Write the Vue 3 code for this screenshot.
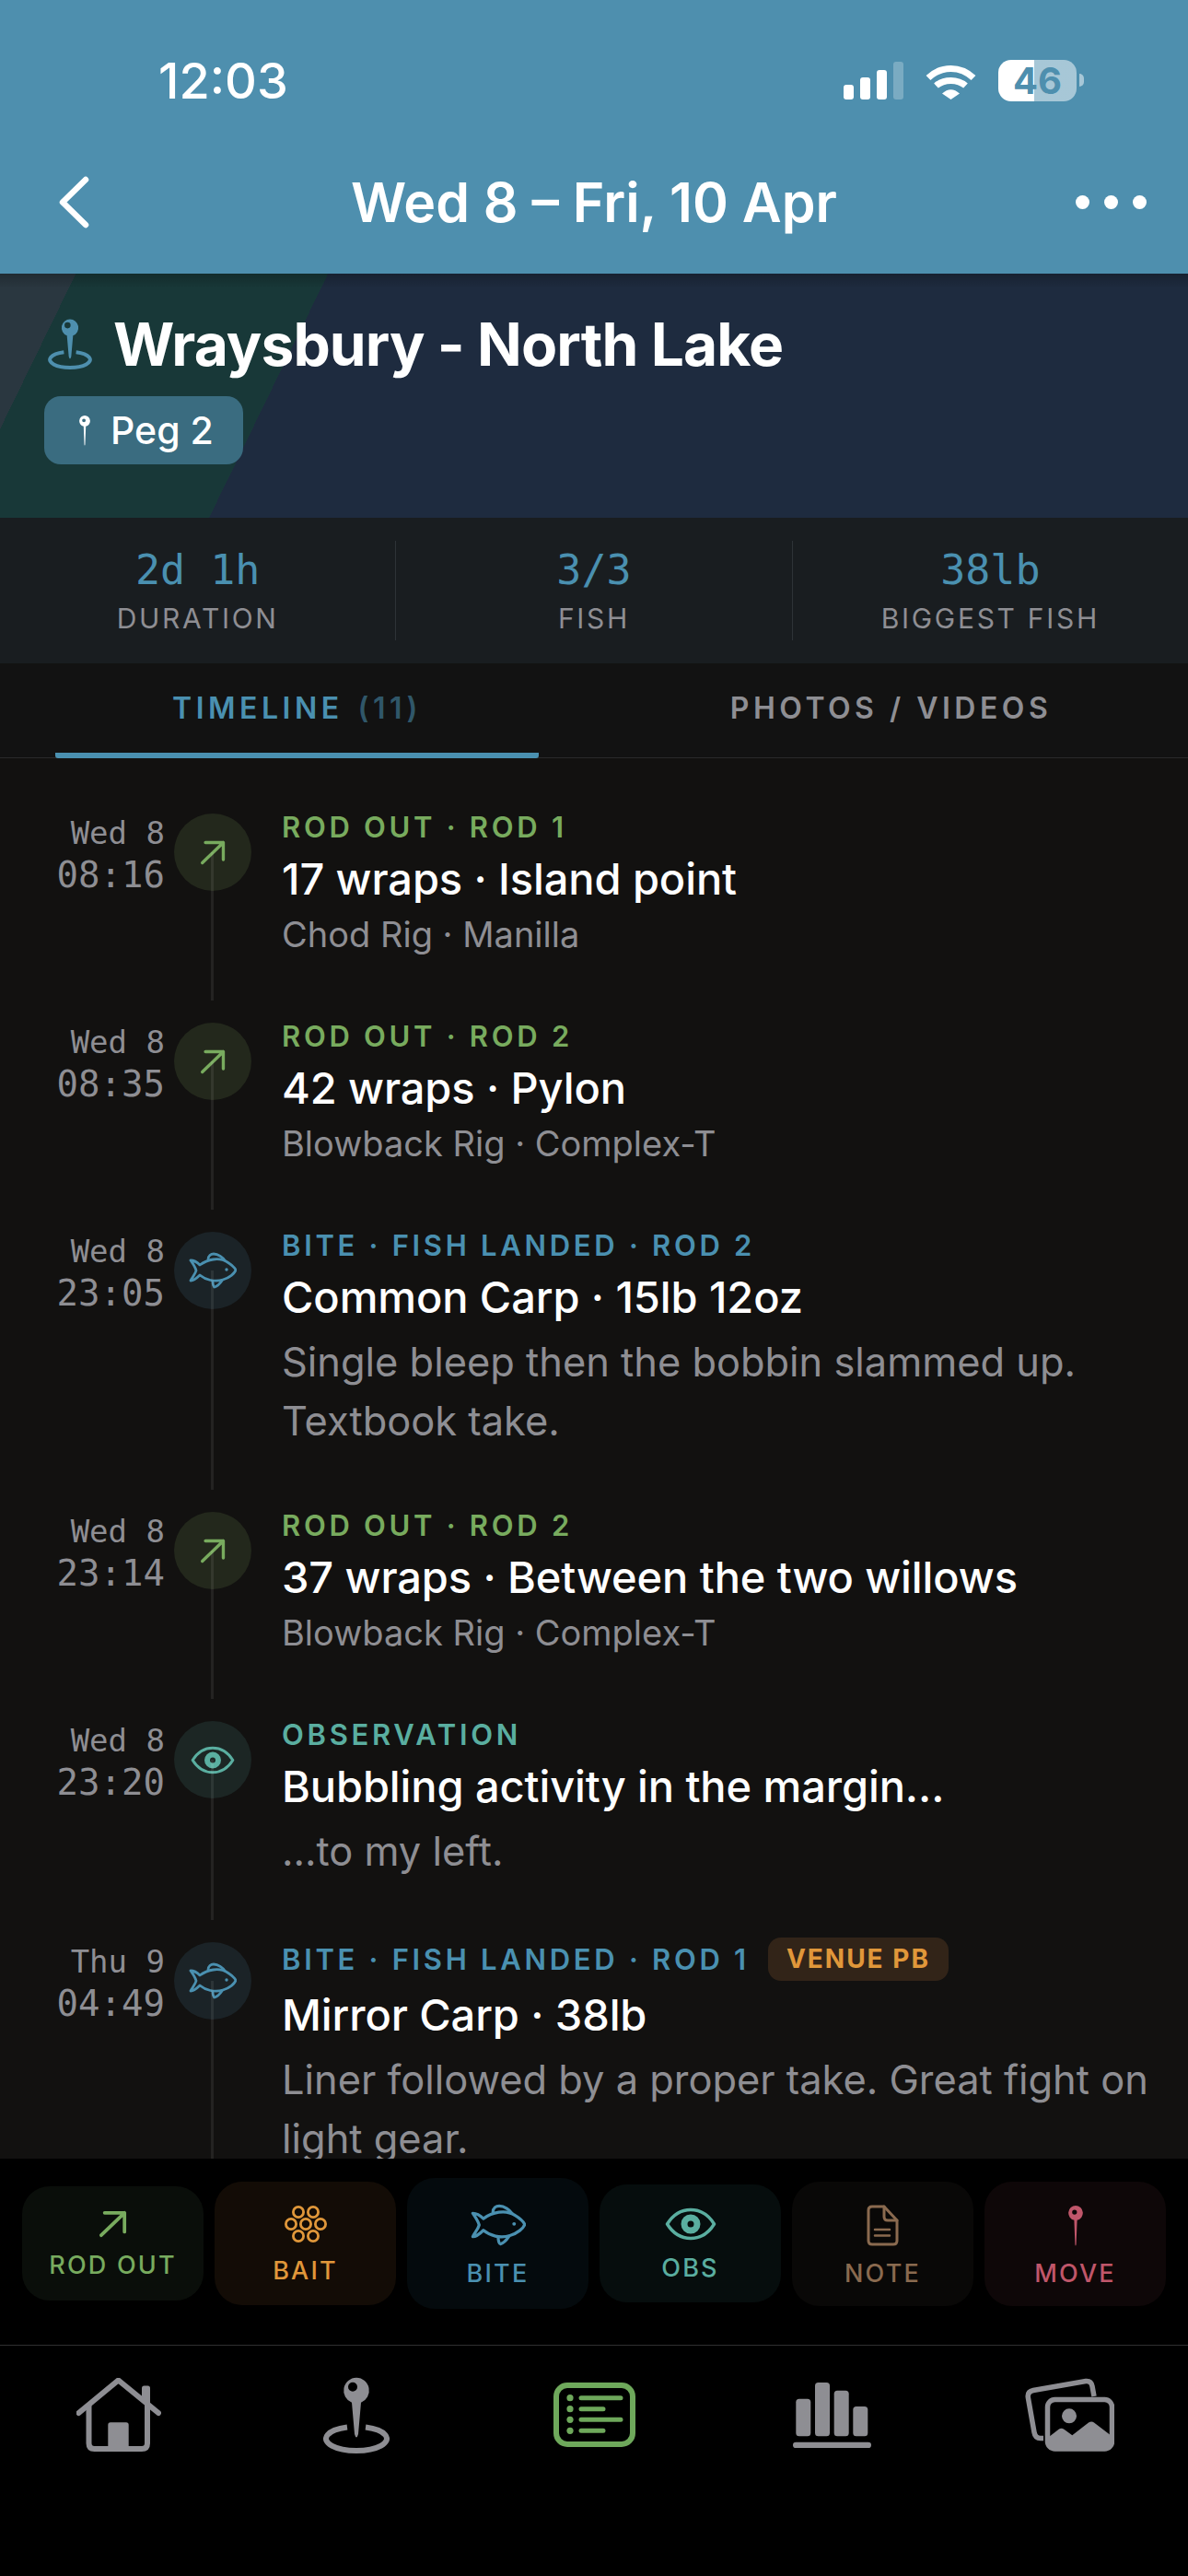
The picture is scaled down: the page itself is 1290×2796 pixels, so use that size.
<template>
  <div class="screen">
    <svg class="defs" width="0" height="0" aria-hidden="true">
      <symbol id="i-arrow" viewBox="0 0 34 32">
        <path d="M3 29 L30 3 M7 3 H30 V25" fill="none" stroke="currentColor" stroke-width="4" stroke-linecap="round" stroke-linejoin="round" />
      </symbol>
      <symbol id="i-fish" viewBox="0 0 52 40">
        <g fill="none" stroke="currentColor" stroke-width="2.8" stroke-linejoin="round" stroke-linecap="round">
          <path d="M12 14 C20 8 33 5 42 11 C46 13.5 50 17 51 19.5 C50 23 44 28 37 30 C28 33 18 30 12 25 C8 29 4 31 2 31 C4 27 7 24 8 20 C7 16 4 12 2 9 C5 9 9 11 12 14 Z" />
          <path d="M21 8 C21 4 24 2 27 2 C32 2 37 6 39 9" />
          <path d="M26 32 C26 35 27 38 28 38 C31 37 34 34 36 31" />
        </g>
        <circle cx="41" cy="19" r="1.7" fill="currentColor" />
      </symbol>
      <symbol id="i-eye" viewBox="0 0 56 36">
        <path d="M2.5 18 C10 6 19 2.5 28 2.5 C37 2.5 46 6 53.5 18 C46 30 37 33.5 28 33.5 C19 33.5 10 30 2.5 18 Z" fill="none" stroke="currentColor" stroke-width="3.5" stroke-linejoin="round" />
        <path fill-rule="evenodd" fill="currentColor" d="M28 7.5 a10.5 10.5 0 1 0 0 21 a10.5 10.5 0 1 0 0 -21 Z M28 14.5 a3.5 3.5 0 1 1 0 7 a3.5 3.5 0 1 1 0 -7 Z" />
      </symbol>
      <symbol id="i-bait" viewBox="0 0 46 42">
        <g fill="none" stroke="currentColor" stroke-width="2.8">
          <circle cx="15" cy="8" r="5.6" /><circle cx="31" cy="8" r="5.6" />
          <circle cx="7" cy="21" r="5.6" /><circle cx="23" cy="21" r="5.6" /><circle cx="39" cy="21" r="5.6" />
          <circle cx="15" cy="34" r="5.6" /><circle cx="31" cy="34" r="5.6" />
        </g>
      </symbol>
      <symbol id="i-note" viewBox="0 0 35 45">
        <g fill="none" stroke="currentColor" stroke-width="3" stroke-linejoin="round" stroke-linecap="round">
          <path d="M6 2 H19 L33 17 V39 Q33 43 29 43 H6 Q2 43 2 39 V6 Q2 2 6 2 Z" />
          <path d="M19 2 V13 Q19 17 23 17 H33" />
          <path stroke-width="2.5" d="M9 27 H25 M9 33.5 H25" />
        </g>
      </symbol>
      <symbol id="i-peg" viewBox="0 0 16 44">
        <path fill-rule="evenodd" fill="currentColor" d="M8 0 a8 8 0 0 1 1.6 15.8 L8.6 42 Q8 45 7.4 42 L6.4 15.8 A8 8 0 0 1 8 0 Z M6.8 4.5 a2.6 2.6 0 1 0 0 5.2 a2.6 2.6 0 1 0 0 -5.2 Z" />
      </symbol>
      <symbol id="i-pin" viewBox="0 0 72 83">
        <path fill-rule="evenodd" fill="currentColor" d="M36 0.7 a14 14 0 0 1 5 27 L38 62 Q36 69 34 62 L31 27.7 A14 14 0 0 1 36 0.7 Z M32 5.7 a5 5 0 1 0 0 10 a5 5 0 1 0 0 -10 Z" />
        <path d="M46 54.6 A33 13 0 1 1 26 54.6" fill="none" stroke="currentColor" stroke-width="6" />
      </symbol>
    </svg>

    <header class="topbar">
      <div class="status">
        <span class="clock">12:03</span>
        <div class="status-right">
          <svg class="signal" viewBox="0 0 65 41" width="65" height="41">
            <rect x="0" y="25" width="11" height="16" rx="3" fill="#fff" />
            <rect x="18" y="17" width="11" height="24" rx="3" fill="#fff" />
            <rect x="36" y="9" width="11" height="32" rx="3" fill="#fff" />
            <rect x="54" y="0" width="11" height="41" rx="3" fill="#fff" opacity=".25" />
          </svg>
          <svg class="wifi" viewBox="0 0 57 42" width="57" height="42">
            <path d="M4 18.5 C18 5 39 5 53 18.5 M12.5 27 C21 19.5 36 19.5 44.5 27" fill="none" stroke="#fff" stroke-width="7" />
            <path d="M19 35.5 Q28.5 27 38 35.5 L28.5 42 Z" fill="#fff" />
          </svg>
          <div class="battery">
            <div class="battery-body">46</div>
            <div class="battery-cap"></div>
          </div>
        </div>
      </div>
      <div class="nav">
        <svg class="back" viewBox="0 0 33 57" width="33" height="57">
          <path d="M29 4 L4 28.5 L29 53" fill="none" stroke="#fff" stroke-width="6.5" stroke-linecap="round" stroke-linejoin="round" />
        </svg>
        <div class="nav-title">Wed 8 – Fri, 10 Apr</div>
        <div class="dots"><i></i><i></i><i></i></div>
      </div>
    </header>

    <section class="hero">
      <div class="venue">
        <svg class="venue-pin"><use href="#i-pin" /></svg>
        <h1>Wraysbury - North Lake</h1>
      </div>
      <div class="peg">
        <svg class="peg-pin"><use href="#i-peg" /></svg>
        <span>Peg 2</span>
      </div>
    </section>

    <section class="stats">
      <div v-for="s in stats" :key="s.label" class="stat">
        <div class="stat-value">{{ s.value }}</div>
        <div class="stat-label">{{ s.label }}</div>
      </div>
    </section>

    <nav class="tabs">
      <div class="tab active">TIMELINE <span class="count">(11)</span></div>
      <div class="tab">PHOTOS / VIDEOS</div>
    </nav>

    <main class="timeline">
      <div v-for="(e, i) in events" :key="i" class="event">
        <div class="when">
          <div class="day">{{ e.day }}</div>
          <div class="time">{{ e.time }}</div>
        </div>
        <div class="node">
          <div class="dot" :class="'dot-' + e.kind">
            <svg :class="['node-icon', 'ni-' + e.kind]"><use :href="'#i-' + icons[e.kind]" /></svg>
          </div>
          <div class="line"></div>
        </div>
        <div class="body">
          <div class="label-row" :class="{ tagged: e.tag }">
            <span class="label" :class="'c-' + e.kind">{{ e.label }}</span>
            <span v-if="e.tag" class="tag">{{ e.tag }}</span>
          </div>
          <div class="title">{{ e.title }}</div>
          <div v-if="e.rig" class="rig">{{ e.rig }}</div>
          <div v-if="e.note" class="note">{{ e.note }}</div>
        </div>
      </div>
    </main>

    <section class="actions">
      <div v-for="a in actions" :key="a.name" class="action" :class="'act-' + a.kind">
        <svg :class="['action-icon', 'ai-' + a.kind]"><use :href="'#i-' + a.icon" /></svg>
        <span>{{ a.name }}</span>
      </div>
    </section>

    <footer class="tabbar">
      <svg class="tb-icon" viewBox="0 0 92 80" width="92" height="80">
        <path d="M2.5 38 L45.5 2.5 L89 38" fill="none" stroke="currentColor" stroke-width="6" stroke-linecap="round" stroke-linejoin="round" />
        <path d="M13.5 29 V71 Q13.5 77 19.5 77 H71 Q77 77 77 71 V29" fill="none" stroke="currentColor" stroke-width="6" />
        <path d="M34.3 77 V51 Q34.3 48.3 37 48.3 H54 Q56.7 48.3 56.7 51 V77 Z" fill="currentColor" />
        <path d="M71 20 V11 Q71 8.5 73.5 8.5 H77.5 Q80 8.5 80 11 V29 Z" fill="currentColor" />
      </svg>
      <svg class="tb-icon tb-pin"><use href="#i-pin" /></svg>
      <svg class="tb-icon tb-active" viewBox="0 0 89 70" width="89" height="70">
        <rect x="3" y="3" width="83" height="64" rx="12" fill="none" stroke="currentColor" stroke-width="6" />
        <g fill="currentColor">
          <circle cx="18" cy="16.7" r="3.6" /><circle cx="18" cy="28.7" r="3.6" />
          <circle cx="18" cy="40.3" r="3.6" /><circle cx="18" cy="52.3" r="3.6" />
        </g>
        <path d="M30 16.7 H73 M30 28.7 H54 M30 40.3 H73 M30 52.3 H54" fill="none" stroke="currentColor" stroke-width="5" stroke-linecap="round" />
      </svg>
      <svg class="tb-icon" viewBox="0 0 85 71" width="85" height="71">
        <g fill="currentColor">
          <rect x="3.3" y="17.7" width="16" height="40.6" rx="3.5" />
          <rect x="24" y="0" width="16" height="58.3" rx="3.5" />
          <rect x="44.7" y="8.7" width="16" height="49.6" rx="3.5" />
          <rect x="65.3" y="26" width="16" height="32.3" rx="3.5" />
          <rect x="0" y="64.7" width="85" height="6.3" rx="3.1" />
        </g>
      </svg>
      <svg class="tb-icon" viewBox="0 0 97 80" width="97" height="80">
        <path d="M20 65.5 H17 Q11 65.5 10 59 L3.3 21 Q2.5 15 9 13.5 L66 3.5 Q72 3 73 9 L75 20" fill="none" stroke="currentColor" stroke-width="5.5" />
        <rect x="24.5" y="23.5" width="70" height="53.5" rx="8" fill="none" stroke="currentColor" stroke-width="5.5" />
        <circle cx="48" cy="41.3" r="8" fill="currentColor" />
        <path d="M26 64 L37 55.5 Q39.7 54 42 55.5 L51.3 62.3 L69 48.5 Q72.3 46.5 75 48.5 L93 62.3 V72 Q93 78 87 78 H32 Q26 78 26 72 Z" fill="currentColor" />
      </svg>
    </footer>
  </div>
</template>

<script setup>
const stats = [
  { value: '2d 1h', label: 'DURATION' },
  { value: '3/3', label: 'FISH' },
  { value: '38lb', label: 'BIGGEST FISH' },
]

const icons = { rod: 'arrow', bite: 'fish', obs: 'eye' }

const events = [
  { day: 'Wed 8', time: '08:16', kind: 'rod', label: 'ROD OUT · ROD 1', title: '17 wraps · Island point', rig: 'Chod Rig · Manilla' },
  { day: 'Wed 8', time: '08:35', kind: 'rod', label: 'ROD OUT · ROD 2', title: '42 wraps · Pylon', rig: 'Blowback Rig · Complex-T' },
  { day: 'Wed 8', time: '23:05', kind: 'bite', label: 'BITE · FISH LANDED · ROD 2', title: 'Common Carp · 15lb 12oz', note: 'Single bleep then the bobbin slammed up. Textbook take.' },
  { day: 'Wed 8', time: '23:14', kind: 'rod', label: 'ROD OUT · ROD 2', title: '37 wraps · Between the two willows', rig: 'Blowback Rig · Complex-T' },
  { day: 'Wed 8', time: '23:20', kind: 'obs', label: 'OBSERVATION', title: 'Bubbling activity in the margin...', note: '...to my left.' },
  { day: 'Thu 9', time: '04:49', kind: 'bite', label: 'BITE · FISH LANDED · ROD 1', tag: 'VENUE PB', title: 'Mirror Carp · 38lb', note: 'Liner followed by a proper take. Great fight on light gear.' },
]

const actions = [
  { name: 'ROD OUT', kind: 'rod', icon: 'arrow' },
  { name: 'BAIT', kind: 'bait', icon: 'bait' },
  { name: 'BITE', kind: 'bite', icon: 'fish' },
  { name: 'OBS', kind: 'obs', icon: 'eye' },
  { name: 'NOTE', kind: 'note', icon: 'note' },
  { name: 'MOVE', kind: 'move', icon: 'peg' },
]
</script>

<style>
html, body { background: #000; }
</style>

<style scoped>
.screen {
  width: 1290px;
  height: 2796px;
  display: flex;
  flex-direction: column;
  overflow: hidden;
  background: #000;
  font-family: Inter, "Liberation Sans", sans-serif;
  color: #fff;
}

.defs { position: absolute; }

.topbar {
  height: 297px;
  flex: none;
  background: #4e8fae;
}

.status {
  height: 174px;
  display: flex;
  align-items: center;
  justify-content: space-between;
  padding: 0 113px 0 172px;
}

.clock {
  font-size: 54px;
  font-weight: 500;
}

.status-right {
  display: flex;
  align-items: center;
  gap: 23px;
}

.battery {
  display: flex;
  align-items: center;
  gap: 3px;
}

.battery-body {
  width: 85px;
  height: 45px;
  border-radius: 14px;
  display: flex;
  align-items: center;
  justify-content: center;
  background: linear-gradient(90deg, #fff 46%, rgba(255, 255, 255, 0.5) 46%);
  color: #4e8fae;
  font-size: 40px;
  font-weight: 700;
}

.battery-cap {
  width: 5px;
  height: 14px;
  border-radius: 0 6px 6px 0;
  background: rgba(255, 255, 255, 0.5);
}

.nav {
  height: 90px;
  display: grid;
  grid-template-columns: 1fr auto 1fr;
  align-items: center;
  padding: 0 64px;
}

.nav-title {
  font-size: 59px;
  font-weight: 600;
}

.dots {
  display: flex;
  justify-content: flex-end;
  gap: 16px;
  margin-right: -19px;
}

.dots i {
  width: 15px;
  height: 15px;
  border-radius: 50%;
  background: #fff;
}

.hero {
  height: 265px;
  flex: none;
  padding: 38px 48px 0;
  box-sizing: border-box;
  background:
    linear-gradient(180deg, rgba(0, 0, 0, 0.22), rgba(0, 0, 0, 0) 16px),
    linear-gradient(116deg, #2a3740 5.8%, #183838 5.8%, #183838 25.1%, #1e2b3f 25.1%);
}

.venue {
  display: flex;
  align-items: center;
  gap: 23px;
  height: 76px;
}

.venue-pin {
  width: 48px;
  height: 55px;
  margin-left: 4px;
  color: #4e8fae;
}

.venue h1 {
  margin: 0;
  font-size: 64px;
  font-weight: 700;
  letter-spacing: -0.9px;
}

.peg {
  margin-top: 19px;
  width: 216px;
  height: 74px;
  box-sizing: border-box;
  padding-left: 38px;
  display: flex;
  align-items: center;
  gap: 22px;
  border-radius: 18px;
  background: #3a6c80;
  font-size: 41px;
  font-weight: 500;
}

.peg-pin {
  width: 12px;
  height: 33px;
  color: #fff;
}

.stats {
  height: 158px;
  flex: none;
  display: flex;
  align-items: center;
  background: #191d20;
}

.stat {
  flex: 1;
  height: 108px;
  display: flex;
  flex-direction: column;
  align-items: center;
  border-right: 1px solid #2e3337;
}

.stat:last-child { border-right: none; }

.stat-value {
  font-family: "DejaVu Sans Mono", monospace;
  font-size: 45px;
  line-height: 64px;
  color: #4a90b0;
}

.stat-label {
  font-size: 30px;
  line-height: 40px;
  letter-spacing: 2.7px;
  color: #8e8e93;
}

.tabs {
  height: 103px;
  flex: none;
  box-sizing: border-box;
  display: flex;
  gap: 120px;
  padding: 0 60px;
  background: #121212;
  border-bottom: 1px solid #2a2a2a;
}

.tab {
  flex: 1;
  display: flex;
  justify-content: center;
  gap: 0.5em;
  padding-top: 29px;
  font-size: 32px;
  line-height: 40px;
  font-weight: 600;
  letter-spacing: 4.5px;
  color: #8e8e93;
}

.tab.active {
  height: 103px;
  box-sizing: border-box;
  color: #4a90b0;
  border-bottom: 6px solid #4a90b0;
  border-radius: 3px;
}

.count { opacity: 0.55; }

.timeline {
  flex: 1;
  min-height: 0;
  overflow: hidden;
  padding-top: 60px;
  background: #121110;
}

.event {
  display: flex;
  padding-bottom: 67px;
}

.when {
  width: 179px;
  flex: none;
  padding-top: 1px;
  text-align: right;
  font-family: "DejaVu Sans Mono", monospace;
  color: #8e8e93;
}

.day {
  font-size: 34px;
  line-height: 40px;
}

.time {
  font-size: 39px;
  line-height: 52px;
}

.node {
  width: 84px;
  flex: none;
  margin: 0 33px 0 10px;
  position: relative;
}

.dot {
  width: 84px;
  height: 84px;
  border-radius: 50%;
  display: flex;
  align-items: center;
  justify-content: center;
}

.dot-rod { background: #23281c; color: #78ab5e; }
.dot-bite { background: #1b2327; color: #4a90b0; }
.dot-obs { background: #1c2624; color: #5aaea0; }

.ni-rod { width: 29px; height: 27px; }
.ni-bite { width: 52px; height: 40px; }
.ni-obs { width: 48px; height: 31px; }

.line {
  position: absolute;
  left: 40px;
  top: 42px;
  bottom: -43px;
  width: 3px;
  background: rgba(255, 255, 255, 0.08);
}

.body {
  flex: 1;
  padding-right: 30px;
  min-width: 0;
}

.label-row {
  display: flex;
  align-items: center;
  gap: 20px;
  height: 28px;
}

.label-row.tagged { height: 36px; }

.label {
  font-size: 31px;
  font-weight: 600;
  letter-spacing: 3.7px;
}

.c-rod { color: #78ab5e; }
.c-bite { color: #4a90b0; }
.c-obs { color: #5aaea0; }

.tag {
  margin: -6px 0;
  height: 47px;
  padding: 0 20px;
  display: flex;
  align-items: center;
  border-radius: 14px;
  background: #322418;
  color: #e0973a;
  font-size: 28px;
  font-weight: 700;
  letter-spacing: 2px;
}

.title {
  margin-top: 11px;
  font-size: 47px;
  line-height: 64px;
  font-weight: 450;
  letter-spacing: -0.1px;
}

.rig {
  margin-top: 3px;
  margin-bottom: 3px;
  font-size: 38px;
  line-height: 51px;
  color: #8e8e93;
}

.note {
  margin-top: 6px;
  font-size: 43.4px;
  line-height: 64px;
  color: #8e8e93;
}

.actions {
  height: 202px;
  flex: none;
  box-sizing: border-box;
  display: flex;
  align-items: center;
  gap: 12px;
  padding: 0 24px 18px;
  background: #000;
}

.action {
  flex: 1;
  display: flex;
  flex-direction: column;
  align-items: center;
  border-radius: 30px;
  font-size: 27px;
  line-height: 32px;
  font-weight: 500;
  letter-spacing: 2.2px;
}

.action span { margin-top: 14px; }

.act-rod { padding: 26px 0 22px; background: #0a0e0a; color: #78ab5e; }
.act-bait { padding: 25px 0 21px; background: #130c06; color: #e0973a; }
.act-bite { padding: 28px 0 22px; background: #040a0d; color: #4a90b0; }
.act-obs { padding: 25px 0 21px; background: #060d0d; color: #5aaea0; }
.act-note { padding: 25px 0 19px; background: #090807; color: #8a6a4f; }
.act-move { padding: 26px 0 19px; background: #0e0708; color: #c0566a; }

.ai-rod { width: 32px; height: 30px; }
.ai-bait { width: 46px; height: 42px; }
.ai-bite { width: 60px; height: 46px; }
.ai-obs { width: 56px; height: 36px; }
.ai-note { width: 35px; height: 45px; }
.ai-move { width: 16px; height: 44px; }

.tabbar {
  height: 251px;
  flex: none;
  box-sizing: border-box;
  display: grid;
  grid-template-columns: repeat(5, 1fr);
  grid-auto-rows: 80px;
  align-items: center;
  justify-items: center;
  padding-top: 35px;
  border-top: 1px solid #2f2f31;
  background: #000;
}

.tb-icon { color: #8e8e93; }
.tb-pin { width: 72px; height: 83px; }
.tb-active { color: #6ea85b; }
</style>
